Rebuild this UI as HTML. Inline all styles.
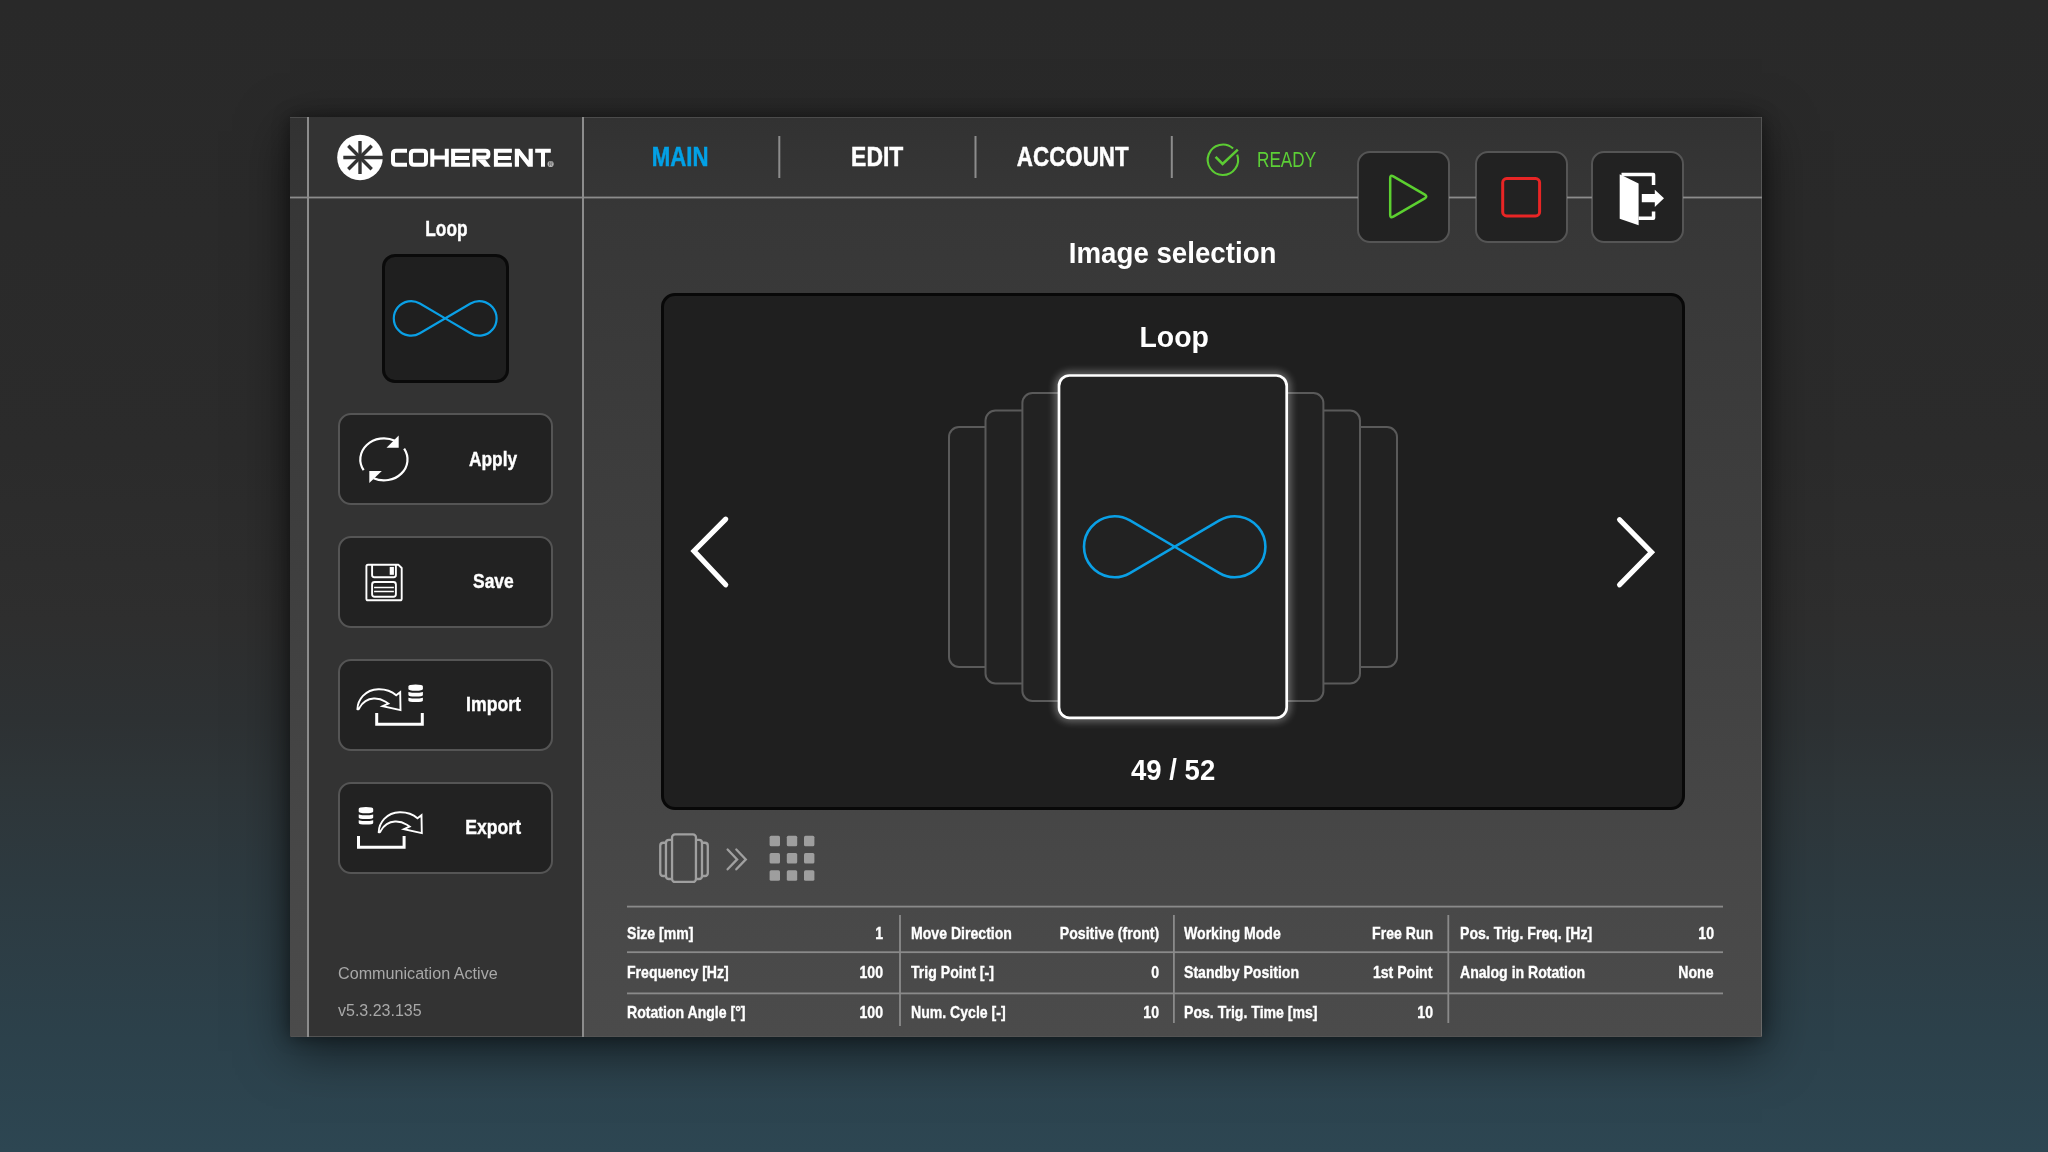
<!DOCTYPE html>
<html><head><meta charset="utf-8">
<style>
*{box-sizing:border-box;margin:0;padding:0}
html,body{width:2048px;height:1152px;overflow:hidden}
body{position:relative;font-family:"Liberation Sans",sans-serif;color:#fff;
background:linear-gradient(180deg,#292929 0px,#2b2b2b 450px,#2e2e2e 620px,#2d3133 720px,#2e3538 780px,#2d3a40 880px,#2c414b 1040px,#2d4652 1152px);}
#panel{position:absolute;left:290px;top:117px;width:1472px;height:920px;
background:linear-gradient(180deg,#323232 0%,#373737 10%,#3f3f3f 50%,#474747 80%,#4b4b4b 100%);
box-shadow:0 0 16px rgba(0,0,0,0.4),0 14px 48px rgba(0,0,0,0.55);border:1px solid rgba(255,255,255,0.16);border-top-color:transparent;border-left-color:transparent;}
#side{position:absolute;left:17px;top:-1px;width:275px;height:919px;background:#333333}
.vl{position:absolute;width:2px;background:#8c8c8c}
.hl{position:absolute;height:2px;background:#8c8c8c}
.t{position:absolute;white-space:nowrap;line-height:1;text-align:center;will-change:transform}
.t span{display:inline-block;transform-origin:center center}
.bx{position:absolute;background:#222;border:2.4px solid #555;border-radius:13px}
#svg{position:absolute;left:0;top:0}
.tb{position:absolute;white-space:nowrap;line-height:1;will-change:transform;font:700 16.2px "Liberation Sans";color:#fff}
.tb span{display:inline-block;transform:scaleX(0.87);-webkit-text-stroke:0.35px #fff}
</style></head>
<body>
<div id="panel"><div id="side"></div></div>
<div class="vl" style="left:307px;top:117px;height:920px"></div>
<div class="vl" style="left:582px;top:117px;height:920px"></div>


<!-- header buttons -->
<div class="bx" style="left:1357px;top:151px;width:93px;height:92px"></div>
<div class="bx" style="left:1475px;top:151px;width:93px;height:92px"></div>
<div class="bx" style="left:1591px;top:151px;width:93px;height:92px"></div>

<!-- sidebar -->
<div class="bx" style="left:382px;top:254px;width:127px;height:129px;background:#1f1f1f;border:3px solid #0a0a0a;border-radius:13px"></div>
<div class="bx" style="left:338px;top:413px;width:215px;height:92px"></div>
<div class="bx" style="left:338px;top:536px;width:215px;height:92px"></div>
<div class="bx" style="left:338px;top:659px;width:215px;height:92px"></div>
<div class="bx" style="left:338px;top:782px;width:215px;height:92px"></div>

<!-- carousel -->
<div class="bx" style="left:661px;top:293px;width:1024px;height:517px;background:#1f1f1f;border:3px solid #080808;border-radius:14px"></div>

<!-- TEXT -->
<div class="t" style="left:530px;width:300px;top:140.2px;font:700 28.3px 'Liberation Sans';color:#03a1e6"><span style="transform:scaleX(0.785);-webkit-text-stroke:0.5px #03a1e6">MAIN</span></div>
<div class="t" style="left:727px;width:300px;top:140.2px;font:700 28.3px 'Liberation Sans'"><span style="transform:scaleX(0.81);-webkit-text-stroke:0.5px #fff">EDIT</span></div>
<div class="t" style="left:923px;width:300px;top:140.2px;font:700 28.3px 'Liberation Sans'"><span style="transform:scaleX(0.79);-webkit-text-stroke:0.5px #fff">ACCOUNT</span></div>
<div class="t" style="left:1256.5px;top:147.8px;font:400 21.2px 'Liberation Sans';color:#5ccf36;text-align:left"><span style="transform:scaleX(0.81);transform-origin:left center">READY</span></div>

<div class="t" style="left:1022.9px;width:300px;top:236.6px;font:700 28.7px 'Liberation Sans'"><span style="transform:scaleX(0.965)">Image selection</span></div>
<div class="t" style="left:1023.5px;width:300px;top:320.5px;font:700 28.8px 'Liberation Sans'"><span style="transform:scaleX(0.985)">Loop</span></div>
<div class="t" style="left:1023px;width:300px;top:753.2px;font:700 29.5px 'Liberation Sans'"><span style="transform:scaleX(0.933)">49 / 52</span></div>

<div class="t" style="left:345.7px;width:200px;top:215.6px;font:700 21.6px 'Liberation Sans'"><span style="transform:scaleX(0.8);-webkit-text-stroke:0.4px #fff">Loop</span></div>
<div class="t" style="left:443px;width:100px;top:446.8px;font:700 20.9px 'Liberation Sans'"><span style="transform:scaleX(0.83);-webkit-text-stroke:0.4px #fff">Apply</span></div>
<div class="t" style="left:443px;width:100px;top:569.3px;font:700 20.9px 'Liberation Sans'"><span style="transform:scaleX(0.835);-webkit-text-stroke:0.4px #fff">Save</span></div>
<div class="t" style="left:443px;width:100px;top:692.3px;font:700 20.9px 'Liberation Sans'"><span style="transform:scaleX(0.845);-webkit-text-stroke:0.4px #fff">Import</span></div>
<div class="t" style="left:443px;width:100px;top:815.3px;font:700 20.9px 'Liberation Sans'"><span style="transform:scaleX(0.845);-webkit-text-stroke:0.4px #fff">Export</span></div>

<div class="t" style="left:337.6px;top:963.5px;font:400 16.15px 'Liberation Sans';color:#a8a8a8;text-align:left">Communication Active</div>
<div class="t" style="left:338px;top:1002.2px;font:400 16px 'Liberation Sans';color:#a8a8a8;text-align:left">v5.3.23.135</div>

<!-- TABLE -->
<div id="table">






<div class="tb" style="left:627px;top:924.3px"><span style="transform-origin:left center">Size [mm]</span></div>
<div class="tb" style="right:1164.5px;top:924.3px;text-align:right"><span style="transform-origin:right center">1</span></div>
<div class="tb" style="left:910.9px;top:924.3px"><span style="transform-origin:left center">Move Direction</span></div>
<div class="tb" style="right:889.0px;top:924.3px;text-align:right"><span style="transform-origin:right center">Positive (front)</span></div>
<div class="tb" style="left:1184.2px;top:924.3px"><span style="transform-origin:left center">Working Mode</span></div>
<div class="tb" style="right:615.3px;top:924.3px;text-align:right"><span style="transform-origin:right center">Free Run</span></div>
<div class="tb" style="left:1460.3px;top:924.3px"><span style="transform-origin:left center">Pos. Trig. Freq. [Hz]</span></div>
<div class="tb" style="right:334.4px;top:924.3px;text-align:right"><span style="transform-origin:right center">10</span></div>
<div class="tb" style="left:627px;top:963.4px"><span style="transform-origin:left center">Frequency [Hz]</span></div>
<div class="tb" style="right:1164.5px;top:963.4px;text-align:right"><span style="transform-origin:right center">100</span></div>
<div class="tb" style="left:910.9px;top:963.4px"><span style="transform-origin:left center">Trig Point [-]</span></div>
<div class="tb" style="right:889.0px;top:963.4px;text-align:right"><span style="transform-origin:right center">0</span></div>
<div class="tb" style="left:1184.2px;top:963.4px"><span style="transform-origin:left center">Standby Position</span></div>
<div class="tb" style="right:615.3px;top:963.4px;text-align:right"><span style="transform-origin:right center">1st Point</span></div>
<div class="tb" style="left:1460.3px;top:963.4px"><span style="transform-origin:left center">Analog in Rotation</span></div>
<div class="tb" style="right:334.4px;top:963.4px;text-align:right"><span style="transform-origin:right center">None</span></div>
<div class="tb" style="left:627px;top:1003.0px"><span style="transform-origin:left center">Rotation Angle [°]</span></div>
<div class="tb" style="right:1164.5px;top:1003.0px;text-align:right"><span style="transform-origin:right center">100</span></div>
<div class="tb" style="left:910.9px;top:1003.0px"><span style="transform-origin:left center">Num. Cycle [-]</span></div>
<div class="tb" style="right:889.0px;top:1003.0px;text-align:right"><span style="transform-origin:right center">10</span></div>
<div class="tb" style="left:1184.2px;top:1003.0px"><span style="transform-origin:left center">Pos. Trig. Time [ms]</span></div>
<div class="tb" style="right:615.3px;top:1003.0px;text-align:right"><span style="transform-origin:right center">10</span></div>
</div>

<svg id="svg" width="2048" height="1152" viewBox="0 0 2048 1152">
<!-- structural lines -->
<g fill="#8c8c8c"><rect x="290" y="196.6" width="1068" height="1.8"/><rect x="1449" y="196.6" width="27" height="1.8"/><rect x="1567" y="196.6" width="25" height="1.8"/><rect x="1683" y="196.6" width="79" height="1.8"/></g>
<g fill="#8a8a8a">
<rect x="627" y="905.7" width="1096" height="1.8"/>
<rect x="627" y="951.3" width="1096" height="1.8"/>
<rect x="627" y="992.5" width="1096" height="1.8"/>
<rect x="899.1" y="915" width="1.8" height="111"/>
<rect x="1173" y="915" width="1.8" height="108"/>
<rect x="1447.4" y="915" width="1.8" height="108"/>
</g>

<!-- logo -->
<circle cx="360" cy="157.5" r="22.8" fill="#fff"/>
<g stroke="#333" stroke-width="3.4" stroke-linecap="butt">
<line x1="360" y1="141" x2="360" y2="174"/>
<line x1="343.3" y1="157.5" x2="384" y2="157.5"/>
<line x1="348.3" y1="145.8" x2="371.7" y2="169.2"/>
<line x1="348.3" y1="169.2" x2="371.7" y2="145.8"/>
</g>
<g fill="none" stroke="#fff" stroke-width="4" stroke-linejoin="round">
<path d="M407,150.8 H396 Q393,150.8 393,153.8 V161.7 Q393,164.7 396,164.7 H407"/>
<path d="M414,150.8 H423 Q426,150.8 426,153.8 V161.7 Q426,164.7 423,164.7 H414 Q410.9,164.7 410.9,161.7 V153.8 Q410.9,150.8 414,150.8 Z"/>
<path d="M432.3,148.8 V166.8 M446.8,148.8 V166.8 M432.3,157.5 H446.8" stroke-linejoin="miter"/>
<path d="M470,150.8 H453.1 V164.7 H470 M453.1,157.9 H469" stroke-linejoin="miter"/>
<path d="M474.4,166.8 V150.8 H485.4 Q488.4,150.8 488.4,153.8 V154.6 Q488.4,157.6 485.4,157.6 H474.4" stroke-linejoin="miter"/>
<path d="M511.9,150.8 H495.9 V164.7 H511.9 M495.9,157.9 H511" stroke-linejoin="miter"/>

<path d="M535.2,150.8 H550.8 M543,150.8 V166.8" stroke-linejoin="miter"/>
</g>
<g fill="#fff"><path d="M477,159.4 H485.2 L490.6,166.8 H484.4 Z"/>
<path d="M514.8,148.8 H519.5 L528.6,160.5 V148.8 H532.8 V166.8 H528 L519,155.2 V166.8 H514.8 Z"/></g>
<circle cx="550.6" cy="164" r="3.1" fill="#b4b4b4"/><path d="M549.5,166.2 V161.9 H551.2 Q552.2,161.9 552.2,162.9 Q552.2,163.9 551.2,163.9 H549.5 M550.8,163.9 L552.1,166.2" fill="none" stroke="#555" stroke-width="0.6"/>

<!-- nav separators -->
<g fill="#8c8c8c">
<rect x="778.3" y="136" width="2" height="42"/>
<rect x="974.5" y="136" width="2" height="42"/>
<rect x="1170.8" y="136" width="2" height="42"/>
</g>
<!-- ready icon -->
<g fill="none" stroke="#5ccc33" stroke-width="2.1">
<path d="M1237.18,154.6 A15.2,15.2 0 1 1 1233.07,148.5"/>
<path d="M1215.6,156.9 L1222.6,163.9 L1237.8,149.6" stroke-width="2.6"/>
</g>
<!-- play/stop/exit -->
<path d="M1390.2,178 Q1390.2,174.5 1393.3,176.3 L1424.8,194.6 Q1427.8,196.6 1424.8,198.4 L1393.3,216.7 Q1390.2,218.5 1390.2,215 Z" fill="none" stroke="#5cd030" stroke-width="2.5" stroke-linejoin="round"/>
<rect x="1502.7" y="178.6" width="36.9" height="37.3" rx="4" fill="none" stroke="#e82525" stroke-width="3"/>
<g fill="#fff">
<path d="M1619.7,174.2 L1638.6,183.6 L1638.6,225.3 L1619.7,218.7 Z"/>
<path d="M1621.5,172.7 H1653.3 Q1655.3,172.7 1655.3,174.7 V184.9 H1651.8 V176.2 H1621.5 Z"/>
<path d="M1638.6,216.5 H1651.8 V211.4 H1655.3 V218 Q1655.3,220 1653.3,220 H1638.6 Z"/>
<path d="M1641.8,194 H1654.8 V189.7 L1664,198.2 L1654.8,207 V202.3 H1641.8 Z"/>
</g>

<!-- sidebar thumbnail infinity -->
<path d="M445.20,318.40 L419.88,303.49 A17.3,17.3 0 1 0 419.88,333.31 L470.52,303.49 A17.3,17.3 0 1 1 470.52,333.31 Z" fill="none" stroke="#0aa0e6" stroke-width="2.2"/>

<!-- refresh icon -->
<g fill="none" stroke="#fff" stroke-width="2.2">
<path d="M363.67,470.22 A23.6,21 0 0 1 394.98,440.86"/>
<path d="M404.13,448.58 A23.6,21 0 0 1 373.55,478.27"/>
</g>
<g fill="#fff">
<path d="M386.5,447.7 L398.7,447.7 L398.7,435.5 Z"/>
<path d="M369.3,471.1 L381.8,471.1 L369.3,483.1 Z"/>
</g>
<!-- floppy -->
<g fill="none" stroke="#fff" stroke-width="1.9" stroke-linejoin="round">
<path d="M368,564.8 H398.5 L401.7,568 V598.7 Q401.7,600.3 400.1,600.3 H368 Q366.4,600.3 366.4,598.7 V566.4 Q366.4,564.8 368,564.8 Z"/>
<path d="M372.1,564.8 V575 Q372.1,577.2 374.3,577.2 H393.7 Q395.9,577.2 395.9,575 V564.8"/>
<rect x="372.1" y="582" width="23.8" height="14.7" rx="2.5"/>
<path d="M374.1,587.6 H393.9 M374.1,591.5 H393.9" stroke-width="1.5"/>
</g>
<rect x="389.7" y="566.9" width="4.2" height="7.9" fill="#fff"/>

<!-- import icon -->
<g id="imp">
<path d="M357.4,709.2 C357.6,700 365,689.5 378.3,689.2 C386,689 392,691.5 396.2,695.2 L400.2,692.2 L400.5,710.1 L382.6,706.1 L388.3,703.5 L385.6,701.7 C381,698.9 377,698.3 373.7,698.5 C367,699 362.2,703 359.6,707.6 Q358.6,710 357.4,709.2 Z" fill="none" stroke="#fff" stroke-width="1.9" stroke-linejoin="miter"/>
</g>
<path d="M376.7,713 V724.3 H422.3 V713" fill="none" stroke="#fff" stroke-width="3"/>
<g fill="#fff"><path d="M408.4,686.4 Q408.4,684.6 415.65,684.6 Q422.9,684.6 422.9,686.4 V689 Q422.9,690.8 415.65,690.8 Q408.4,690.8 408.4,689 Z"/><path d="M408.4,691.9 Q415.65,693.6 422.9,691.9 V695 Q422.9,696.6 415.65,696.6 Q408.4,696.6 408.4,695 Z"/><path d="M408.4,697.7 Q415.65,699.4 422.9,697.7 V700.4 Q422.9,702 415.65,702 Q408.4,702 408.4,700.4 Z"/></g>
<!-- export icon -->
<path d="M357.4,709.2 C357.6,700 365,689.5 378.3,689.2 C386,689 392,691.5 396.2,695.2 L400.2,692.2 L400.5,710.1 L382.6,706.1 L388.3,703.5 L385.6,701.7 C381,698.9 377,698.3 373.7,698.5 C367,699 362.2,703 359.6,707.6 Q358.6,710 357.4,709.2 Z" fill="none" stroke="#fff" stroke-width="1.9" stroke-linejoin="miter" transform="translate(21.3,123)"/>
<path d="M376.7,713 V724.3 H422.3 V713" fill="none" stroke="#fff" stroke-width="3" transform="translate(-18.2,123)"/>
<g fill="#fff" transform="translate(-49.7,122.5)"><path d="M408.4,686.4 Q408.4,684.6 415.65,684.6 Q422.9,684.6 422.9,686.4 V689 Q422.9,690.8 415.65,690.8 Q408.4,690.8 408.4,689 Z"/><path d="M408.4,691.9 Q415.65,693.6 422.9,691.9 V695 Q422.9,696.6 415.65,696.6 Q408.4,696.6 408.4,695 Z"/><path d="M408.4,697.7 Q415.65,699.4 422.9,697.7 V700.4 Q422.9,702 415.65,702 Q408.4,702 408.4,700.4 Z"/></g>

<!-- carousel cards -->
<g fill="#222" stroke="#5a5a5a" stroke-width="2">
<rect x="949" y="427" width="448" height="240" rx="10"/>
<rect x="985.5" y="410.5" width="374.5" height="273" rx="10"/>
<rect x="1022.4" y="393" width="301" height="308" rx="10"/>
</g>
<defs><filter id="glow" x="-20%" y="-20%" width="140%" height="140%"><feGaussianBlur stdDeviation="4"/></filter></defs>
<rect x="1059" y="375.5" width="227.7" height="342.3" rx="10.5" fill="none" stroke="#fff" stroke-width="5" opacity="0.55" filter="url(#glow)"/>
<rect x="1059" y="375.5" width="227.7" height="342.3" rx="10.5" fill="#222" stroke="#fff" stroke-width="2.7"/>
<path d="M1174.70,546.75 L1129.95,520.45 A30.5,30.5 0 1 0 1129.95,573.05 L1219.45,520.45 A30.5,30.5 0 1 1 1219.45,573.05 Z" fill="none" stroke="#0aa0e6" stroke-width="2.6"/>
<!-- arrows -->
<g fill="none" stroke="#fff" stroke-width="5.2" stroke-linecap="round" stroke-linejoin="miter">
<path d="M725.7,519.2 L694,551 L725.7,584.8"/>
<path d="M1619.6,519.7 L1651.5,552.2 L1619.6,584.8"/>
</g>

<!-- bottom icons -->
<g fill="none" stroke="#a0a0a0" stroke-width="2.3">
<path d="M666,876 H663.3 Q660.25,876 660.25,873 V845.8 Q660.25,842.75 663.3,842.75 H666"/>
<path d="M672,879 H669 Q665.95,879 665.95,876 V842.9 Q665.95,839.95 669,839.95 H672"/>
<rect x="672.05" y="834.35" width="23.9" height="47.6" rx="3"/>
<path d="M696,839.95 H699 Q702,839.95 702,842.9 V876 Q702,879 699,879 H696"/>
<path d="M702,842.75 H704.8 Q707.8,842.75 707.8,845.8 V873 Q707.8,876 704.8,876 H702"/>
<path d="M727.6,849.5 L737.1,859.4 L727.6,869.3 M736.3,849.5 L745.8,859.4 L736.3,869.3" stroke-linecap="round"/>
</g>
<g fill="#9e9e9e">
<rect x="769.6" y="835.7" width="10.4" height="10.5" rx="1.5"/>
<rect x="786.8" y="835.7" width="10.4" height="10.5" rx="1.5"/>
<rect x="804" y="835.7" width="10.4" height="10.5" rx="1.5"/>
<rect x="769.6" y="852.9" width="10.4" height="10.5" rx="1.5"/>
<rect x="786.8" y="852.9" width="10.4" height="10.5" rx="1.5"/>
<rect x="804" y="852.9" width="10.4" height="10.5" rx="1.5"/>
<rect x="769.6" y="870.2" width="10.4" height="10.5" rx="1.5"/>
<rect x="786.8" y="870.2" width="10.4" height="10.5" rx="1.5"/>
<rect x="804" y="870.2" width="10.4" height="10.5" rx="1.5"/>
</g>
</svg>
</body></html>
